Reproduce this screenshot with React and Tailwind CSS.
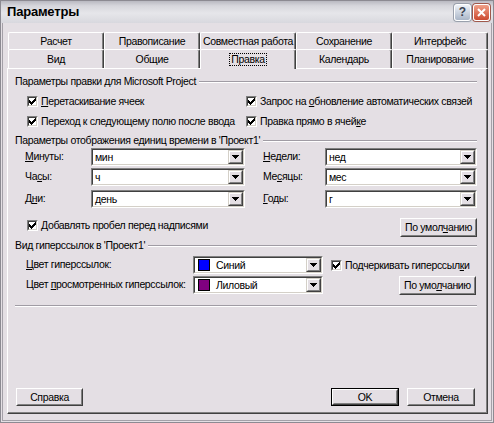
import React from "react";

const BG = "bg-[#e4dfe4]";

function U({ children }) {
  return <span className="underline underline-offset-1">{children}</span>;
}

function Check() {
  return (
    <span className="w-[11px] h-[11px] shrink-0 flex bg-white border border-t-[#808080] border-l-[#808080] border-r-white border-b-white">
      <span className="flex-1 flex items-center justify-center border border-t-[#404040] border-l-[#404040] border-r-[#d4d0c8] border-b-[#d4d0c8]">
        <svg width="7" height="7" viewBox="0 0 7 7" shapeRendering="crispEdges">
          {[2, 3, 4, 3, 2, 1, 0].map((y, x) => (
            <rect key={x} x={x} y={y} width="1" height="3" fill="#000" />
          ))}
        </svg>
      </span>
    </span>
  );
}

function DropBtn() {
  return (
    <div className="w-[15px] shrink-0 flex border border-t-[#d4d0c8] border-l-[#d4d0c8] border-r-[#404040] border-b-[#404040] bg-[#e4dfe4]">
      <div className="flex-1 flex items-center justify-center border border-t-white border-l-white border-r-[#808080] border-b-[#808080]">
        <svg width="7" height="4" viewBox="0 0 7 4" shapeRendering="crispEdges">
          <rect x="0" y="0" width="7" height="1" fill="#000" />
          <rect x="1" y="1" width="5" height="1" fill="#000" />
          <rect x="2" y="2" width="3" height="1" fill="#000" />
          <rect x="3" y="3" width="1" height="1" fill="#000" />
        </svg>
      </div>
    </div>
  );
}

function Combo({ className, children }) {
  return (
    <div className={"h-[18px] shrink-0 flex bg-white border border-t-[#808080] border-l-[#808080] border-r-white border-b-white " + className}>
      <div className="flex-1 min-w-0 flex border border-t-[#404040] border-l-[#404040] border-r-[#d4d0c8] border-b-[#d4d0c8]">
        <div className="flex-1 min-w-0 flex items-center pl-[2px] leading-[13px] whitespace-nowrap">{children}</div>
        <DropBtn />
      </div>
    </div>
  );
}

function Btn({ className, children, def }) {
  const face = (
    <div className="flex-1 flex border border-t-white border-l-white border-r-[#404040] border-b-[#404040]">
      <div className="flex-1 flex items-center justify-center border border-t-[#e4dfe4] border-l-[#e4dfe4] border-r-[#808080] border-b-[#808080] leading-[13px] whitespace-nowrap">
        {children}
      </div>
    </div>
  );
  if (def) {
    return <div className={"shrink-0 flex border border-black " + className}>{face}</div>;
  }
  return <div className={"shrink-0 flex " + className}>{face}</div>;
}

function Header({ children }) {
  return (
    <div className="h-[13px] flex items-center pl-[7px] pr-[10px]">
      <span className="whitespace-nowrap leading-[13px]">{children}</span>
      <div className="flex-1 ml-[3px] h-[2px] border-t border-t-[#a09ca4] border-b border-b-white" />
    </div>
  );
}

function CheckLabel({ children, className }) {
  return (
    <div className={"flex items-center gap-[3px] shrink-0 " + (className || "")}>
      <Check />
      <span className="whitespace-nowrap leading-[13px]">{children}</span>
    </div>
  );
}

function Label({ className, children }) {
  return (
    <div className={"shrink-0 flex items-center whitespace-nowrap " + className}>
      <span>{children}</span>
    </div>
  );
}

function Tab({ children, h, selected }) {
  if (selected) {
    return (
      <div className="w-[96px] h-[20px] -mb-[1px] relative z-10 bg-[#e4dfe4] flex items-center justify-center border-t border-l border-t-white border-l-white border-r border-r-[#404040] shadow-[inset_-1px_0_0_#808080] rounded-t-[2px]">
        <span className="border border-dotted border-black px-[1px] leading-[11px] -mt-[1px] whitespace-nowrap">{children}</span>
      </div>
    );
  }
  return (
    <div className={"w-[96px] flex items-center justify-center border-t border-l border-t-white border-l-white border-r border-r-[#404040] shadow-[inset_-1px_0_0_#808080] rounded-t-[2px] " + h}>
      <span className="leading-[13px] whitespace-nowrap">{children}</span>
    </div>
  );
}

export default function App() {
  return (
    <div className={"w-[494px] h-[423px] flex flex-col border border-[#8c8a92] text-[10.5px] tracking-[-0.35px] text-black font-['Liberation_Sans',Arial,sans-serif] " + BG}>
      {/* Title bar */}
      <div className="h-[22px] shrink-0 flex items-center pl-[6px] pr-[3px] bg-[linear-gradient(to_bottom,#b9b9c1_0%,#d6d6dc_22%,#e6e6ea_55%,#d8d8de_100%)]">
        <span className="font-bold text-[13px] leading-[16px] tracking-[-0.2px]">Параметры</span>
        <div className="ml-auto flex gap-[2px]">
          <div className="w-[17px] h-[17px] rounded-[3px] border border-white bg-[linear-gradient(to_bottom,#eef2f8,#aab6c8)] flex items-center justify-center shadow-[0_0_0_1px_#9aa0ac]">
            <span className="text-[12px] font-bold text-[#3c4452] leading-[12px] tracking-normal">?</span>
          </div>
          <div className="w-[17px] h-[17px] rounded-[3px] border border-white bg-[linear-gradient(to_bottom,#f0a088,#cc4a30)] flex items-center justify-center shadow-[0_0_0_1px_#a0584c]">
            <svg width="9" height="9" viewBox="0 0 9 9">
              <path d="M1 1L8 8M8 1L1 8" stroke="#fff" strokeWidth="2" />
            </svg>
          </div>
        </div>
      </div>

      {/* Body */}
      <div className="flex-1 mx-[1px] mb-[1px] border-x border-b border-[#a4a0a8] flex flex-col pl-[4px] pt-[9px]">
        <div className="ml-[1px] flex flex-col">
          <div className="flex h-[17px]">
            <Tab h="h-[17px]">Расчет</Tab>
            <Tab h="h-[17px]">Правописание</Tab>
            <Tab h="h-[17px]">Совместная работа</Tab>
            <Tab h="h-[17px]">Сохранение</Tab>
            <Tab h="h-[17px]">Интерфейс</Tab>
          </div>
          <div className="flex h-[19px]">
            <Tab h="h-[19px]">Вид</Tab>
            <Tab h="h-[19px]">Общие</Tab>
            <Tab selected>Правка</Tab>
            <Tab h="h-[19px]">Календарь</Tab>
            <Tab h="h-[19px]">Планирование</Tab>
          </div>
        </div>

        {/* Panel */}
        <div className="w-[481px] h-[346px] flex flex-col border border-t-white border-l-white border-r-[#404040] border-b-[#404040] shadow-[inset_-1px_-1px_0_#808080]">
          <div className="mt-[6px]">
            <Header>Параметры правки для Microsoft Project</Header>
          </div>
          <div className="mt-[5px] h-[16px] flex items-center pl-[19px]">
            <CheckLabel className="w-[219px]">
              <U>П</U>еретаскивание ячеек
            </CheckLabel>
            <CheckLabel>
              Запрос на <U>о</U>бновление автоматических связей
            </CheckLabel>
          </div>
          <div className="mt-[4px] h-[16px] flex items-center pl-[19px]">
            <CheckLabel className="w-[219px]">
              Перехо<U>д</U> к следующему полю после ввода
            </CheckLabel>
            <CheckLabel>
              Правка прямо в ячей<U>к</U>е
            </CheckLabel>
          </div>

          <div className="mt-[5px]">
            <Header>Параметры отображения единиц времени в 'Проект1'</Header>
          </div>

          <div className="mt-[1px] h-[18px] flex">
            <Label className="ml-[17px] w-[66px]"><U>М</U>инуты:</Label>
            <Combo className="w-[154px]">мин</Combo>
            <Label className="ml-[18px] w-[62px]"><U>Н</U>едели:</Label>
            <Combo className="w-[152px]">нед</Combo>
          </div>
          <div className="mt-[2px] h-[18px] flex">
            <Label className="ml-[17px] w-[66px]">Ча<U>с</U>ы:</Label>
            <Combo className="w-[154px]">ч</Combo>
            <Label className="ml-[18px] w-[62px]">Ме<U>с</U>яцы:</Label>
            <Combo className="w-[152px]">мес</Combo>
          </div>
          <div className="mt-[4px] h-[18px] flex">
            <Label className="ml-[17px] w-[66px]">Д<U>н</U>и:</Label>
            <Combo className="w-[154px]">день</Combo>
            <Label className="ml-[18px] w-[62px]"><U>Г</U>оды:</Label>
            <Combo className="w-[152px]">г</Combo>
          </div>

          <div className="mt-[10px] h-[19px] flex items-start pl-[19px] pr-[10px]">
            <CheckLabel className="mt-[1px]">
              <U>Д</U>обавлять пробел перед надписями
            </CheckLabel>
            <Btn className="ml-auto w-[77px] h-[19px]">
              <span>По умол<U>ч</U>анию</span>
            </Btn>
          </div>

          <div className="mt-[2px]">
            <Header>Вид гиперссылок в 'Проект1'</Header>
          </div>

          <div className="mt-[4px] h-[18px] flex">
            <Label className="ml-[18px] w-[167px]"><U>Ц</U>вет гиперссылок:</Label>
            <Combo className="w-[130px]">
              <span className="w-[12px] h-[12px] ml-[1px] border border-black bg-[#0000ff] shrink-0" />
              <span className="ml-[6px]">Синий</span>
            </Combo>
            <CheckLabel className="ml-[8px]">
              Подчеркивать гиперссыл<U>к</U>и
            </CheckLabel>
          </div>
          <div className="mt-[2px] h-[18px] flex">
            <Label className="ml-[18px] w-[167px]">Цвет <U>п</U>росмотренных гиперссылок:</Label>
            <Combo className="w-[130px]">
              <span className="w-[12px] h-[12px] ml-[1px] border border-black bg-[#800080] shrink-0" />
              <span className="ml-[6px]">Лиловый</span>
            </Combo>
            <Btn className="ml-[76px] w-[77px] h-[19px]">
              <span>По умо<U>л</U>чанию</span>
            </Btn>
          </div>

          <div className="mt-[11px] ml-[7px] mr-[10px] h-[2px] border-t border-t-[#a09ca4] border-b border-b-white" />

          <div className="mt-auto mb-[7px] h-[18px] flex pl-[8px] pr-[12px]">
            <Btn className="w-[67px] h-[18px]">Справка</Btn>
            <Btn def className="ml-auto w-[68px] h-[18px]">OK</Btn>
            <Btn className="ml-[8px] w-[68px] h-[18px]">Отмена</Btn>
          </div>
        </div>
      </div>
    </div>
  );
}
